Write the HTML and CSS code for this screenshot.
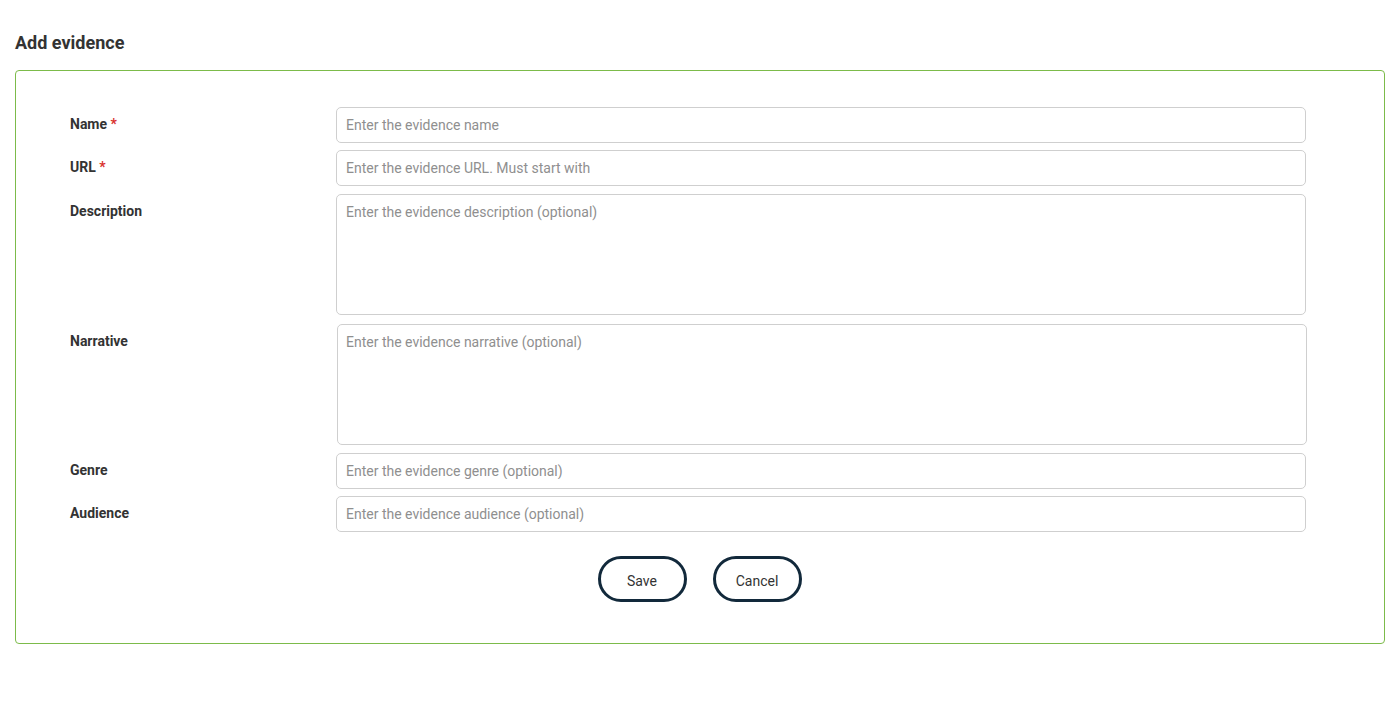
FILE: index.html
```html
<!DOCTYPE html>
<html lang="en">
<head>
<meta charset="utf-8">
<title>Add evidence</title>
<link rel="stylesheet" href="styles.css">
</head>
<body>
<main class="page">
  <h2 class="title">Add evidence</h2>
  <section class="card">
    <form class="form">
      <div class="row row-tight">
        <label class="label" for="name">Name <span class="req">*</span></label>
        <input id="name" class="field" type="text" placeholder="Enter the evidence name">
      </div>
      <div class="row">
        <label class="label" for="url">URL <span class="req">*</span></label>
        <input id="url" class="field" type="text" placeholder="Enter the evidence URL. Must start with">
      </div>
      <div class="row row-wide">
        <label class="label" for="desc">Description</label>
        <textarea id="desc" class="field area" placeholder="Enter the evidence description (optional)"></textarea>
      </div>
      <div class="row">
        <label class="label" for="narr">Narrative</label>
        <textarea id="narr" class="field area area-shift" placeholder="Enter the evidence narrative (optional)"></textarea>
      </div>
      <div class="row row-tight">
        <label class="label" for="genre">Genre</label>
        <input id="genre" class="field" type="text" placeholder="Enter the evidence genre (optional)">
      </div>
      <div class="row">
        <label class="label" for="aud">Audience</label>
        <input id="aud" class="field" type="text" placeholder="Enter the evidence audience (optional)">
      </div>
      <div class="actions">
        <button type="button" class="btn">Save</button>
        <button type="button" class="btn">Cancel</button>
      </div>
    </form>
  </section>
</main>
</body>
</html>
```
FILE: styles.css
```css
* { box-sizing: border-box; }
html, body { margin: 0; padding: 0; background: #fff; }
body {
  font-family: Roboto, "Liberation Sans", Arial, sans-serif;
  color: #333;
}
.page { padding: 31px 15px 0 15px; }
.title {
  margin: 0 0 15px 0;
  font-size: 18px;
  line-height: 24px;
  font-weight: 700;
  color: #333;
}
.card {
  border: 1px solid #7cbb4a;
  border-radius: 4px;
  padding: 36px 78px 41px 54px;
}
.form { display: flex; flex-direction: column; }
.row {
  display: flex;
  align-items: flex-start;
  margin-bottom: 8px;
}
.row-tight { margin-bottom: 7px; }
.row-wide { margin-bottom: 9px; }
.label {
  width: 266px;
  flex: 0 0 266px;
  padding-top: 9px;
  font-size: 14px;
  line-height: 17px;
  font-weight: 700;
  color: #333;
}
.req { color: #d9302c; }
.field {
  flex: 1 1 auto;
  height: 36px;
  border: 1px solid #cfcfcf;
  border-radius: 5px;
  padding: 0 9px;
  font-family: Roboto, "Liberation Sans", Arial, sans-serif;
  font-size: 14px;
  color: #333;
  background: #fff;
  outline: none;
}
.field::placeholder { color: #8f8f8f; opacity: 1; }
.area {
  height: 121px;
  padding: 8px 9px;
  resize: none;
  line-height: 18px;
  display: block;
}
.area-shift { margin-left: 1px; margin-right: -1px; padding-left: 8px; }
.actions {
  display: flex;
  justify-content: center;
  gap: 26px;
  margin-top: 16px;
  padding-left: 23px;
}
.btn {
  width: 89px;
  height: 46px;
  padding: 3px 0 0 0;
  border: 3px solid #12293b;
  border-radius: 23px;
  background: #fff;
  font-family: Roboto, "Liberation Sans", Arial, sans-serif;
  font-size: 14px;
  color: #333;
  cursor: pointer;
}
```
